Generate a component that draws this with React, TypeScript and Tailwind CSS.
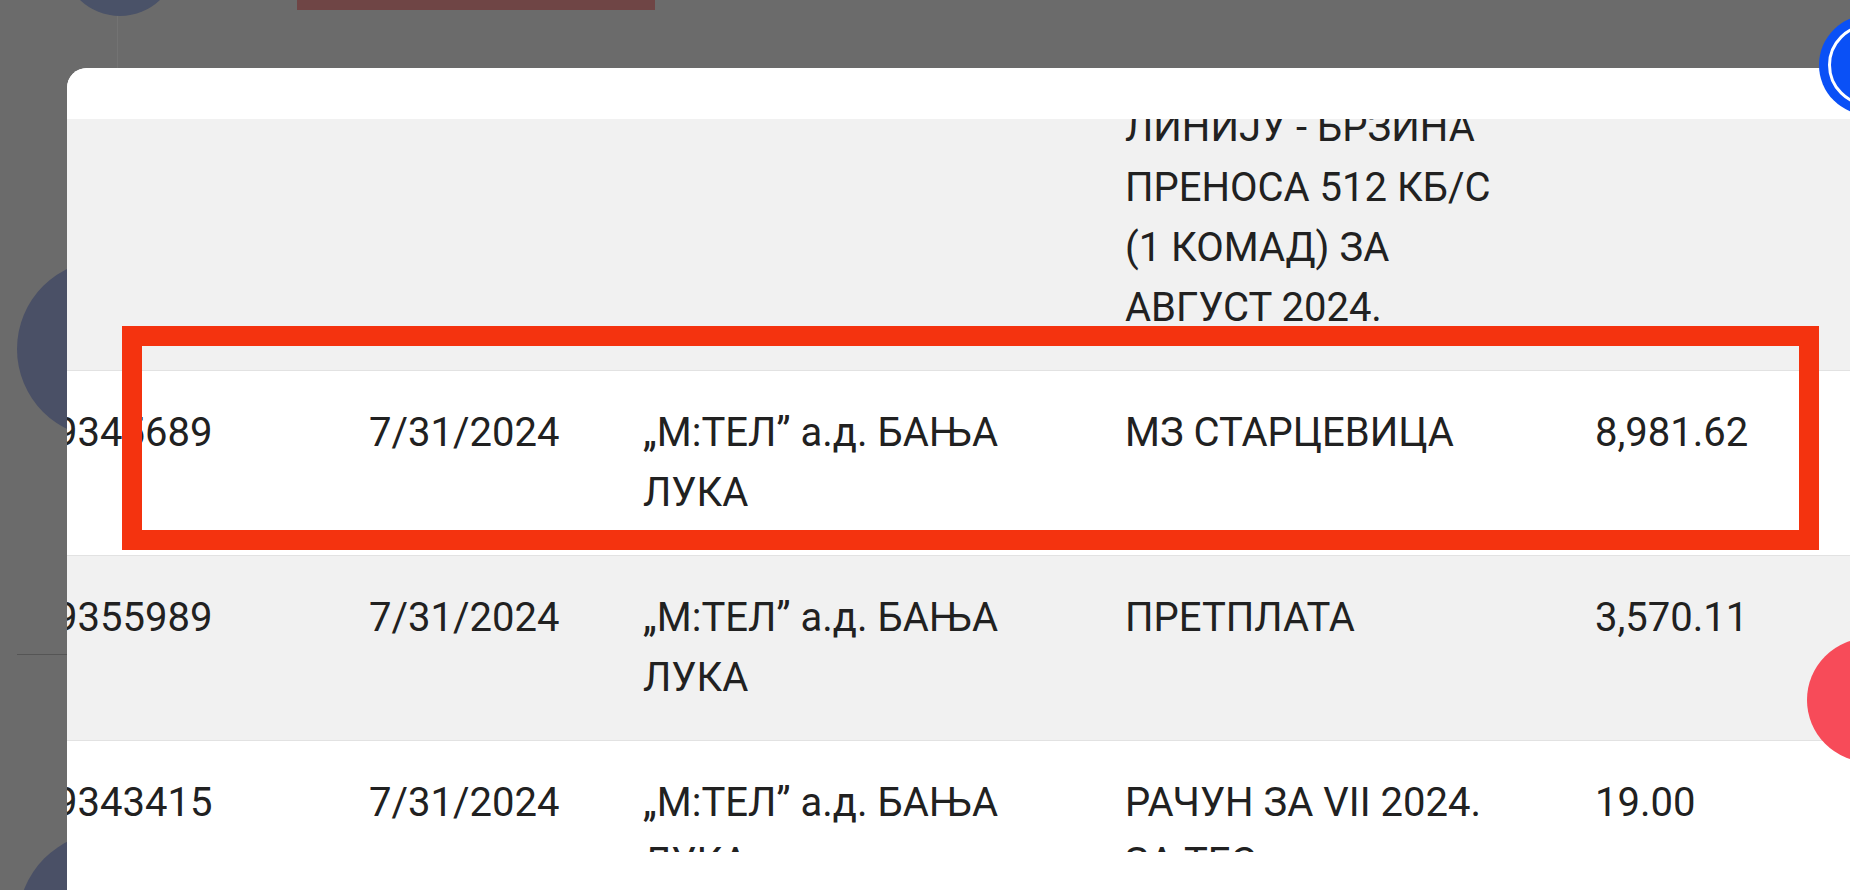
const COLS = "grid grid-cols-[314px_274px_482px_470px_1fr]";

type Row = { id: string; date: string; firm: string; desc: string; amount: string; shaded: boolean };

const ROWS: Row[] = [
  {
    id: "9345102",
    date: "7/31/2024",
    firm: "„М:ТЕЛ” а.д. БАЊА ЛУКА",
    desc: "ЗАКУП ВОДА ЗА ИЗНАЈМЉЕНУ ЛИНИЈУ - БРЗИНА ПРЕНОСА 512 КБ/С (1 КОМАД) ЗА АВГУСТ 2024.",
    amount: "142.38",
    shaded: true,
  },
  { id: "9345689", date: "7/31/2024", firm: "„М:ТЕЛ” а.д. БАЊА ЛУКА", desc: "МЗ СТАРЦЕВИЦА", amount: "8,981.62", shaded: false },
  { id: "9355989", date: "7/31/2024", firm: "„М:ТЕЛ” а.д. БАЊА ЛУКА", desc: "ПРЕТПЛАТА", amount: "3,570.11", shaded: true },
  { id: "9343415", date: "7/31/2024", firm: "„М:ТЕЛ” а.д. БАЊА ЛУКА", desc: "РАЧУН ЗА VII 2024. ЗА ТЕС", amount: "19.00", shaded: false },
];

function TableRow({ row }: { row: Row }) {
  return (
    <div className={`${COLS} py-[32px] border-b border-[#e2e2e2] ${row.shaded ? "bg-[#f1f1f1]" : "bg-white"}`}>
      <div className="pr-[40px]">{row.id}</div>
      <div className="pr-[40px]">{row.date}</div>
      <div className="pr-[80px]">{row.firm}</div>
      <div className="pr-[80px]">{row.desc}</div>
      <div>{row.amount}</div>
    </div>
  );
}

export default function App() {
  const [first, ...rest] = ROWS;
  return (
    <div className="relative w-[1850px] h-[890px] overflow-hidden bg-[#6b6b6b] font-[Roboto,sans-serif]">
      {/* dimmed page behind the dialog */}
      <div className="absolute left-[62px] top-[-100px] w-[116px] h-[116px] rounded-full bg-[#4a5268]" />
      <div className="absolute left-[117px] top-[16px] w-px h-[52px] bg-[#737373]" />
      <div className="absolute left-[297px] top-0 w-[358px] h-[10px] bg-[#6f4545]" />
      <div className="absolute left-[17px] top-[260px] w-[178px] h-[178px] rounded-full bg-[#4a5066]" />
      <div className="absolute left-[17px] top-[654px] w-[50px] h-px bg-[#555555]" />
      <div className="absolute left-[18px] top-[832px] w-[180px] h-[180px] rounded-full bg-[#4a5066]" />

      {/* dialog */}
      <div className="relative pl-[67px] pt-[68px]">
        <div className="w-[1850px] h-[900px] bg-white rounded-tl-[20px] overflow-hidden flex flex-col text-[40px] leading-[60px] text-[#212121]">
          <div className="h-[51px] shrink-0 bg-white" />
          <div className="h-[733px] shrink-0 overflow-hidden">
            <div className="-ml-[12px]">
              <div className="h-[252px] overflow-hidden flex flex-col justify-end">
                <TableRow row={first} />
              </div>
              {rest.map((r) => (
                <TableRow key={r.id} row={r} />
              ))}
            </div>
          </div>
          <div className="flex-1 bg-white" />
        </div>
      </div>

      {/* annotation frame */}
      <div className="absolute left-[122px] top-[326px] w-[1697px] h-[224px] border-[20px] border-[#f4330f]" />

      {/* floating buttons at right edge */}
      <div className="absolute left-[1819px] top-[15px] w-[100px] h-[100px] rounded-full bg-[#0a50f6] flex items-center justify-center">
        <div className="w-[82px] h-[82px] rounded-full border-[3px] border-white" />
      </div>
      <div className="absolute left-[1807px] top-[638px] w-[124px] h-[124px] rounded-full bg-[#f74b59]" />
    </div>
  );
}
